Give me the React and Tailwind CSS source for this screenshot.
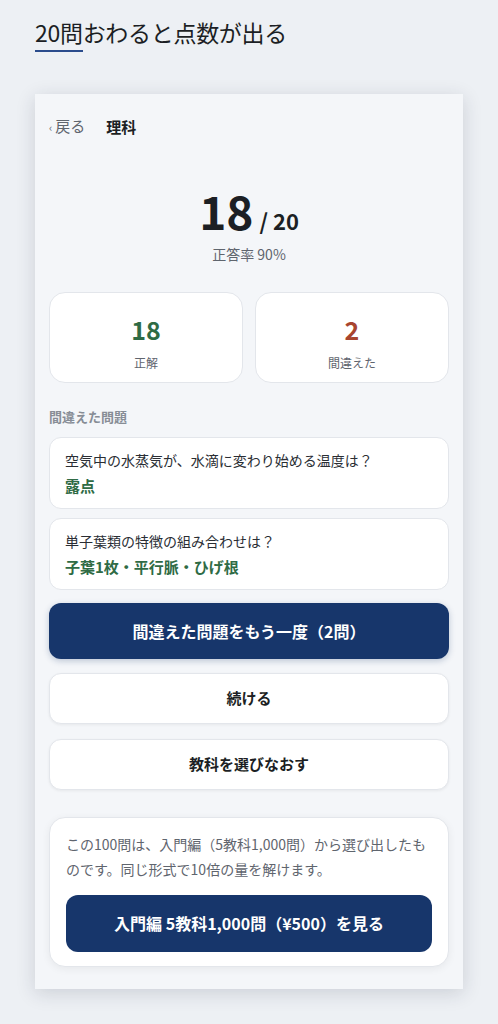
import React from "react";

const font = { fontFamily: '"Noto Sans CJK JP", "Noto Sans", sans-serif' };

const mistakes = [
  { q: "空気中の水蒸気が、水滴に変わり始める温度は？", a: "露点" },
  { q: "単子葉類の特徴の組み合わせは？", a: "子葉1枚・平行脈・ひげ根" },
];

const StatCard = ({ value, label, color }) => (
  <div className="flex h-[91px] flex-col items-center rounded-2xl border border-[#e3e6eb] bg-white pt-[22px]">
    <div className={`text-[25px] font-bold leading-[28px] ${color}`}>{value}</div>
    <div className="mt-[12px] text-[12px] leading-[16px] text-[#5f656e]">{label}</div>
  </div>
);

export default function App() {
  return (
    <div className="min-h-[1024px] bg-[#edf0f4] pb-9 text-[#1c1f24]" style={font}>
      {/* Page heading */}
      <div className="px-[35px] pt-[17px]">
        <h1 className="text-[23px] leading-[31px] tracking-[-0.3px]">
          <span className="border-b-2 border-[#2b4c8c] pb-[1px]">20問</span>おわると点数が出る
        </h1>
      </div>

      {/* Phone frame */}
      <div className="mx-[35px] mt-[46px] bg-[#f4f6f9] px-[14px] pb-[22px] pt-[20px] shadow-[0_4px_18px_rgba(30,40,60,0.16)]">
        {/* Header */}
        <div className="flex items-center text-[15px] leading-[24px]">
          <span className="text-[#5f656e]">
            <span className="text-[11px] mr-[3px]">‹</span>戻る
          </span>
          <span className="ml-[21px] font-bold text-[#1c1f24]">理科</span>
        </div>

        {/* Score */}
        <div className="mt-[45px] flex flex-col items-center">
          <div className="flex items-baseline">
            <span className="text-[46px] font-bold leading-[52px]">18</span>
            <span className="ml-[6px] text-[22px] font-bold">/ 20</span>
          </div>
          <div className="mt-[7px] text-[14px] text-[#5f656e]">正答率 90%</div>
        </div>

        {/* Stats */}
        <div className="mt-[27px] grid grid-cols-2 gap-[12px]">
          <StatCard value="18" label="正解" color="text-[#2f6b45]" />
          <StatCard value="2" label="間違えた" color="text-[#a8452f]" />
        </div>

        {/* Wrong questions */}
        <div className="mt-[24px] text-[13px] font-bold text-[#878d96]">間違えた問題</div>
        <div className="mt-[10px] flex flex-col gap-[9px]">
          {mistakes.map((m) => (
            <div key={m.q} className="rounded-xl border border-[#e3e6eb] bg-white px-[15px] pb-[11px] pt-[11px]">
              <div className="text-[14px] leading-[22px] text-[#2a2e34]">{m.q}</div>
              <div className="mt-[4px] text-[15px] font-bold leading-[22px] text-[#2f6b45]">{m.a}</div>
            </div>
          ))}
        </div>

        {/* Actions */}
        <button className="mt-[13px] flex h-[56px] w-full items-center justify-center rounded-xl bg-[#17366b] text-[16px] font-bold text-white shadow-[0_2px_6px_rgba(23,54,107,0.25)]">
          間違えた問題をもう一度（2問）
        </button>
        <button className="mt-[14px] flex h-[51px] w-full items-center justify-center rounded-xl border border-[#e3e6eb] bg-white text-[15px] font-bold shadow-[0_1px_3px_rgba(0,0,0,0.06)]">
          続ける
        </button>
        <button className="mt-[15px] flex h-[51px] w-full items-center justify-center rounded-xl border border-[#e3e6eb] bg-white text-[15px] font-bold shadow-[0_1px_3px_rgba(0,0,0,0.06)]">
          教科を選びなおす
        </button>

        {/* Promo */}
        <div className="mt-[27px] rounded-2xl border border-[#e3e6eb] bg-white px-[16px] pb-[14px] pt-[14px] shadow-[0_2px_8px_rgba(0,0,0,0.06)]">
          <p className="text-[14px] leading-[25px] text-[#5f656e]">
            この100問は、入門編（5教科1,000問）から選び出したものです。同じ形式で10倍の量を解けます。
          </p>
          <button className="mt-[13px] flex h-[57px] w-full items-center justify-center rounded-xl bg-[#17366b] text-[16px] font-bold text-white">
            入門編 5教科1,000問（¥500）を見る
          </button>
        </div>
      </div>
    </div>
  );
}
